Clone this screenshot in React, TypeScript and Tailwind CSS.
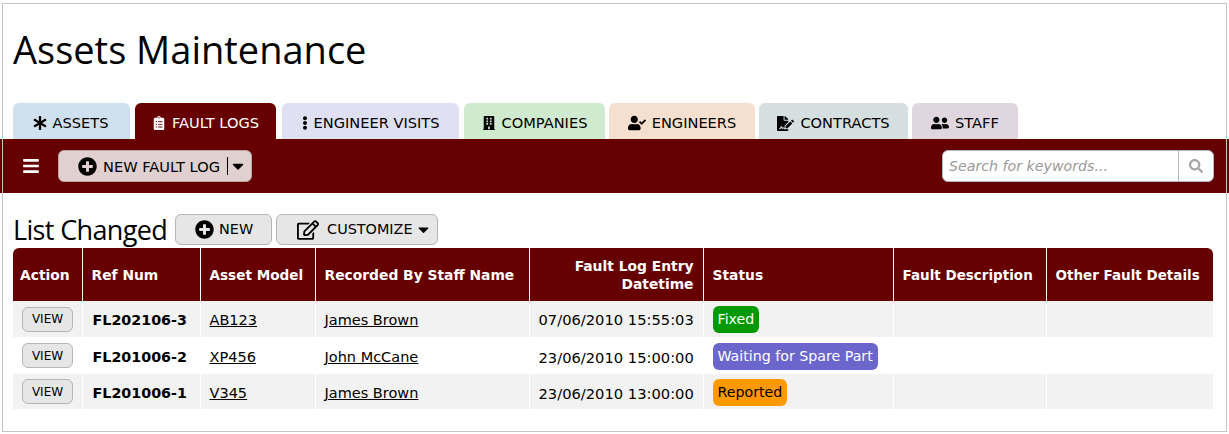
import {
  FaAsterisk,
  FaBars,
  FaBuilding,
  FaCaretDown,
  FaClipboardList,
  FaEllipsisV,
  FaFileSignature,
  FaPlusCircle,
  FaRegEdit,
  FaSearch,
  FaUserCheck,
  FaUserFriends,
} from "react-icons/fa";

const tabs = [
  { label: "ASSETS", icon: <FaAsterisk size={14} />, cls: "w-[117px] bg-[#cfe0ee] text-black pr-[2px]" },
  { label: "FAULT LOGS", icon: <FaClipboardList size={14} />, cls: "ml-[5px] w-[141px] bg-[#660000] text-white" },
  { label: "ENGINEER VISITS", icon: <FaEllipsisV className="h-[14px] w-[6px]" />, cls: "ml-[6px] w-[177px] bg-[#e0e0f3] text-black" },
  { label: "COMPANIES", icon: <FaBuilding size={14} />, cls: "ml-[5px] w-[141px] bg-[#cfeacf] text-black" },
  { label: "ENGINEERS", icon: <FaUserCheck size={18} />, cls: "ml-[4px] w-[146px] bg-[#f5e0cf] text-black" },
  { label: "CONTRACTS", icon: <FaFileSignature size={17} />, cls: "ml-[4px] w-[149px] bg-[#d6dfe0] text-black" },
  { label: "STAFF", icon: <FaUserFriends size={18} />, cls: "ml-[4px] w-[106px] bg-[#e0d6df] text-black" },
];

const rows = [
  {
    ref: "FL202106-3",
    model: "AB123",
    staff: "James Brown",
    date: "07/06/2010 15:55:03",
    status: "Fixed",
    statusCls: "bg-[#009900] text-white",
    h: "h-[36px]",
    bg: "bg-[#f2f2f2]",
    pt: "pt-[3px]",
  },
  {
    ref: "FL201006-2",
    model: "XP456",
    staff: "John McCane",
    date: "23/06/2010 15:00:00",
    status: "Waiting for Spare Part",
    statusCls: "bg-[#6a66cc] text-white",
    h: "h-[37px]",
    bg: "bg-white",
    pt: "pt-[5px]",
  },
  {
    ref: "FL201006-1",
    model: "V345",
    staff: "James Brown",
    date: "23/06/2010 13:00:00",
    status: "Reported",
    statusCls: "bg-[#ff9900] text-black",
    h: "h-[35px]",
    bg: "bg-[#f2f2f2]",
    pt: "pt-[5px]",
  },
];

const th = "border-l border-white px-[9px] pt-[2px] font-bold text-left align-middle whitespace-nowrap";
const td = "border-l border-white px-[9px] align-middle";

const App = () => {
  return (
    <div className="w-[1229px] overflow-hidden p-[3px_2px_2px_2px] font-['DejaVu_Sans',sans-serif]">
      <div className="h-[429px] w-[1225px] border border-[#c4c4c4] bg-white text-black">
        <h1 className="h-[99px] pl-[10px] pt-[19px] text-[38px] leading-[52px] font-normal font-['Open_Sans',sans-serif]">
          Assets Maintenance
        </h1>

        <div className="flex h-[36px] pl-[10px] text-[14.6px]">
          {tabs.map((t) => (
            <div
              key={t.label}
              className={`flex items-center justify-center gap-[6px] rounded-t-[6px] pt-[4px] ${t.cls}`}
            >
              {t.icon}
              <span>{t.label}</span>
            </div>
          ))}
        </div>

        <div className="relative -mx-[3px] flex h-[54px] items-center bg-[#660000] pl-[22px] pr-[15px]">
          {/* frame line stays visible over the bar */}
          <span className="absolute inset-y-0 left-[2px] w-px bg-[#c4c4c4]" />
          <span className="absolute inset-y-0 right-[2px] w-px bg-[#c4c4c4]" />
          <FaBars size={18} className="text-white" />
          <button className="ml-[18px] flex h-[32px] w-[194px] items-center rounded-[6px] border border-[#b8a8a8] bg-[#e0d0d0] pl-[19px] text-[14.6px]">
            <FaPlusCircle size={19} />
            <span className="ml-[6px] pt-[1px]">NEW FAULT LOG</span>
            <span className="ml-[7px] h-[18px] border-l border-black" />
            <FaCaretDown size={18} className="ml-[1px]" />
          </button>
          <div className="ml-auto flex h-[32px] w-[272px] overflow-hidden rounded-[6px] border border-[#b0b8c0] bg-white">
            <input
              placeholder="Search for keywords..."
              className="w-[236px] border-r border-[#b0b8c0] px-[6px] pt-[2px] text-[14.2px] italic placeholder:text-[#999999] outline-none"
            />
            <div className="flex flex-1 items-center justify-center text-[#a6a6a6]">
              <FaSearch size={14} />
            </div>
          </div>
        </div>

        <div className="flex h-[55px] items-end pl-[10px] pb-[3px]">
          <span className="relative top-[3px] mr-[8px] text-[27px] leading-[36px] tracking-[-0.65px] font-['Open_Sans',sans-serif]">
            List Changed
          </span>
          <button className="flex h-[31px] w-[97px] items-center rounded-[6px] border border-[#b0b8b8] bg-[#e6e6e6] pl-[19px] text-[14.4px]">
            <FaPlusCircle size={19} />
            <span className="ml-[5px] pt-[1px]">NEW</span>
          </button>
          <button className="ml-[4px] flex h-[31px] w-[162px] items-center rounded-[6px] border border-[#b0b8b8] bg-[#e6e6e6] pl-[20px] text-[14.4px]">
            <FaRegEdit size={22} />
            <span className="ml-[8px] pt-[1px]">CUSTOMIZE</span>
            <FaCaretDown size={17} className="ml-[2px]" />
          </button>
        </div>

        <div className="pl-[10px]">
          <table className="w-[1200px] table-fixed border-collapse text-[14.5px]">
            <colgroup>
              <col className="w-[69px]" />
              <col className="w-[118px]" />
              <col className="w-[115px]" />
              <col className="w-[214px]" />
              <col className="w-[174px]" />
              <col className="w-[190px]" />
              <col className="w-[153px]" />
              <col className="w-[167px]" />
            </colgroup>
            <thead>
              <tr className="h-[53px] bg-[#660000] text-[13.85px] text-white">
                <th className="rounded-tl-[6px] px-[7px] pt-[2px] text-left font-bold">Action</th>
                <th className={th}>Ref Num</th>
                <th className={`${th} text-[13.6px]`}>Asset Model</th>
                <th className={th}>Recorded By Staff Name</th>
                <th className="border-l border-white px-[9px] text-right align-middle font-bold leading-[18px]">
                  Fault Log Entry Datetime
                </th>
                <th className={th}>Status</th>
                <th className={`${th} text-[13.5px]`}>Fault Description</th>
                <th className={`${th} rounded-tr-[6px] text-[13.5px]`}>Other Fault Details</th>
              </tr>
            </thead>
            <tbody>
              {rows.map((r) => (
                <tr key={r.ref} className={`${r.h} ${r.bg}`}>
                  <td className="pl-[9px]">
                    <button className="flex h-[25px] w-[51px] items-center justify-center rounded-[6px] border border-[#b0b8b8] bg-[#e6e6e6] text-[12px]">
                      VIEW
                    </button>
                  </td>
                  <td className={`${td} pl-[10px] ${r.pt} text-[14.3px] font-bold`}>{r.ref}</td>
                  <td className={`${td} ${r.pt}`}>
                    <a className="underline">{r.model}</a>
                  </td>
                  <td className={`${td} ${r.pt}`}>
                    <a className="underline">{r.staff}</a>
                  </td>
                  <td className={`${td} ${r.pt} text-right text-[14.7px] whitespace-nowrap`}>{r.date}</td>
                  <td className={`${td} pt-[1px]`}>
                    <span className={`inline-block rounded-[6px] px-[5px] py-[4px] text-[14.2px] leading-[19px] ${r.statusCls}`}>
                      {r.status}
                    </span>
                  </td>
                  <td className={td} />
                  <td className={td} />
                </tr>
              ))}
            </tbody>
          </table>
        </div>
      </div>
    </div>
  );
};

export default App;
